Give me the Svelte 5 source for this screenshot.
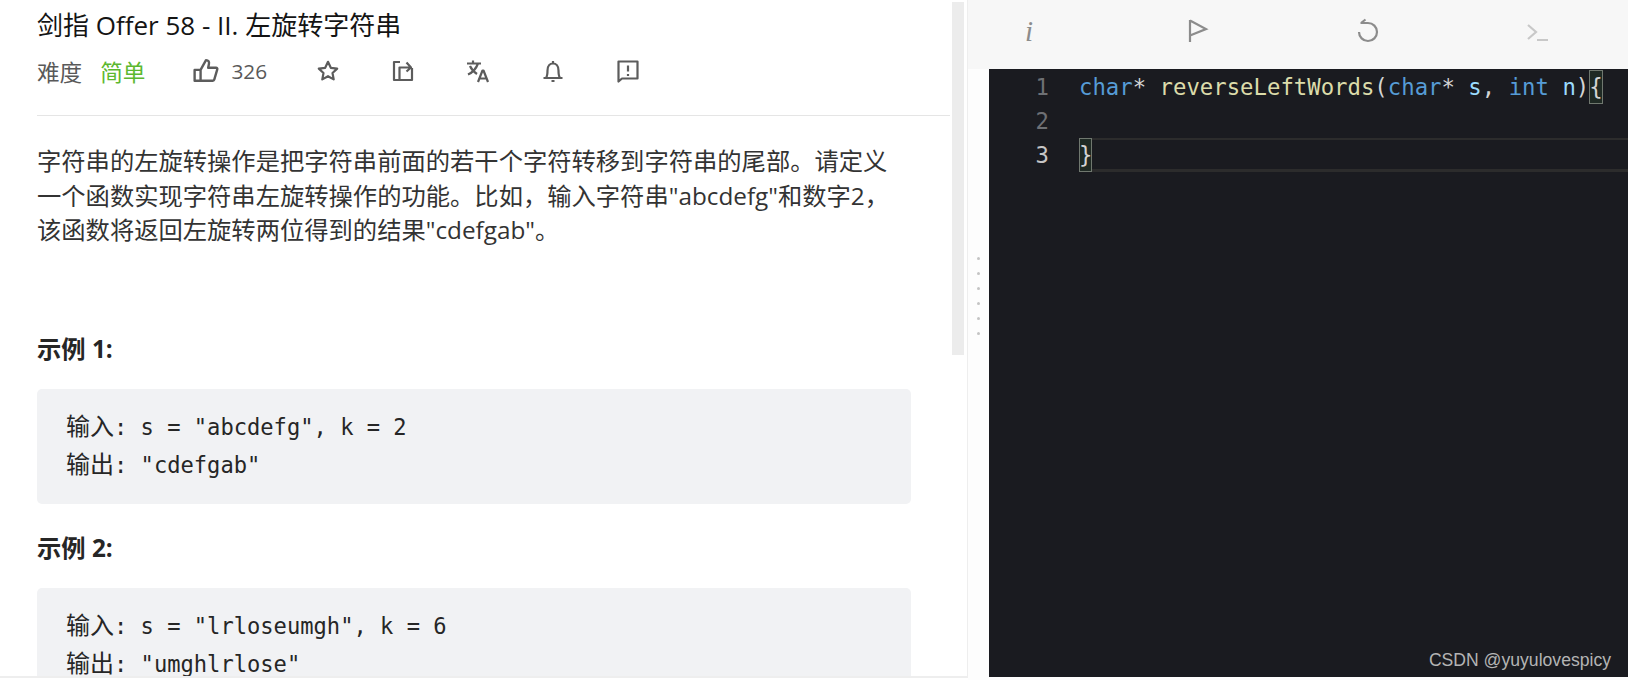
<script>
  const star = 'M12 2.800l2.800 6 6.400.8-4.700 4.400 1.200 6.400-5.700-3.200-5.700 3.200 1.200-6.400-4.700-4.400 6.400-.8z';
</script>

<div class="page">
  <section class="left">
    <div class="scroll-thumb"></div>
    <h1>剑指 Offer 58 - II. 左旋转字符串</h1>
    <div class="meta">
      <span class="label">难度</span>
      <span class="easy">简单</span>
      <div class="actions">
        <span class="action like">
          <svg viewBox="0 0 24 24" class="ico thumb"><path d="M1.500 11h5.500v10H1.500zM7 11l5-9c2.200 0 3.200 1.500 2.700 3.500L14 9h7.300c.8 0 1.400.7 1.100 1.500l-2.700 9.300c-.2.700-.7 1.200-1.400 1.200H7" /></svg>
          <span>326</span>
        </span>
        <span class="action">
          <svg viewBox="0 0 24 24" class="ico"><path d={star} /></svg>
        </span>
        <span class="action">
          <svg viewBox="0 0 24 24" class="ico"><path d="M9 3H3v18h18V9M8.500 20.500V8.500H20M15.500 3.500l4.500 5-4.500 4" /></svg>
        </span>
        <span class="action">
          <svg viewBox="0 0 24 24" class="ico"><path d="M1 4.500h14M7 1.500v3M12 4.500C10 10 6.500 13.500 2 15.500M4 7c1.500 3.500 4 6 7 8M12 23l4.500-11.500h1L22 23M13.500 19.500h7" /></svg>
        </span>
        <span class="action">
          <svg viewBox="0 0 24 24" class="ico"><path d="M2.500 19h19M5 19c1.500-2 1.500-4 1.500-7.500C6.500 7 9 4.500 12 4.500s5.500 2.500 5.500 7c0 3.500 0 5.500 1.500 7.500M12 2v2.500M10.500 22h3" /></svg>
        </span>
        <span class="action">
          <svg viewBox="0 0 24 24" class="ico"><path d="M2.500 2.500h19v17H6l-3.500 3zM12 6.500v6M12 15v2" /></svg>
        </span>
      </div>
    </div>
    <hr />
    <p class="desc">字符串的左旋转操作是把字符串前面的若干个字符转移到字符串的尾部。请定义一个函数实现字符串左旋转操作的功能。比如&#65292;输入字符串"abcdefg"和数字2&#65292;该函数将返回左旋转两位得到的结果"cdefgab"。</p>
    <h4 class="first">示例 1:</h4>
    <pre><span class="cjk">输入</span>: s = "abcdefg", k = 2
<span class="cjk">输出</span>: "cdefgab"</pre>
    <h4>示例 2:</h4>
    <pre><span class="cjk">输入</span>: s = "lrloseumgh", k = 6
<span class="cjk">输出</span>: "umghlrlose"</pre>
  </section>

  <section class="right">
    <div class="toolbar">
      <span class="tool info">i</span>
      <span class="tool">
        <svg viewBox="0 0 24 24" class="tico"><path d="M4 1v22M4 1.500L20 10 4 16.500" /></svg>
      </span>
      <span class="tool">
        <svg viewBox="0 0 24 24" class="tico"><path d="M3 13a9 9 0 1 0 18 0 9 9 0 0 0-9-9H4.500M9.500 .5L5 4" /></svg>
      </span>
      <span class="tool low">
        <svg viewBox="0 0 24 24" class="tico dim"><path d="M3 5l8 7-8 7M12 20h11" /></svg>
      </span>
    </div>
    <div class="body">
      <div class="splitter">
        <i></i><i></i><i></i><i></i><i></i><i></i>
      </div>
      <div class="editor">
        <div class="line">
          <span class="num">1</span>
          <code><span class="kw">char</span>* <span class="fn">reverseLeftWords</span>(<span class="kw">char</span>* <span class="var">s</span>, <span class="kw">int</span> <span class="var">n</span>)<span class="match">{'{'}</span></code>
        </div>
        <div class="line">
          <span class="num">2</span>
          <code></code>
        </div>
        <div class="line current">
          <span class="num">3</span>
          <code><span class="match">{'}'}</span></code>
        </div>
        <div class="watermark">CSDN @yuyulovespicy</div>
      </div>
    </div>
  </section>
</div>

<style>
  :global(body) {
    margin: 0;
    background: #fff;
  }

  .page {
    display: flex;
    width: 1628px;
    height: 680px;
    overflow: hidden;
    font-family: "Open Sans", "Noto Sans CJK SC", sans-serif;
  }

  .left {
    position: relative;
    flex: none;
    box-sizing: border-box;
    width: 968px;
    height: 678px;
    padding: 0 17px 0 37px;
    overflow: hidden;
    border-right: 1px solid #eeeeee;
    border-bottom: 2px solid #eeeeee;
    color: #262626;
  }

  .scroll-thumb {
    position: absolute;
    left: 952px;
    top: 2px;
    width: 12px;
    height: 353px;
    background: #ececec;
  }

  h1 {
    margin: 8px 0 0;
    font-size: 26px;
    line-height: 34px;
    font-weight: 400;
    color: #141414;
  }

  .meta {
    display: flex;
    align-items: center;
    height: 36px;
    margin-top: 11px;
    font-size: 22.600px;
    color: #595959;
  }

  .easy {
    margin-left: 18px;
    color: #5cb82f;
  }

  .actions {
    display: flex;
    align-items: center;
    margin-left: 48px;
  }

  .action {
    display: flex;
    align-items: center;
    width: 75px;
    color: #595959;
    font-size: 20.800px;
  }

  .action.like {
    width: 123px;
    gap: 12px;
  }

  .ico {
    width: 24px;
    height: 24px;
    fill: none;
    stroke: #5c5c5c;
    stroke-width: 2.200;
    stroke-linejoin: round;
  }

  .ico.thumb {
    width: 26px;
    height: 26px;
  }

  hr {
    border: 0;
    height: 1px;
    margin: 26px 0 0;
    background: #e5e5e5;
  }

  .desc {
    margin: 28px 0 0;
    font-size: 24.300px;
    line-height: 34.500px;
    color: #333333;
    width: 860px;
  }

  h4 {
    margin: 27px 0 0;
    font-size: 24.300px;
    line-height: 34px;
    font-weight: 700;
    color: #262626;
  }

  h4.first {
    margin-top: 84px;
  }

  pre {
    box-sizing: border-box;
    margin: 23px 0 0;
    padding: 19px 29px;
    height: 115px;
    width: 874px;
    background: #f1f2f4;
    border-radius: 5px;
    font-family: "DejaVu Sans Mono", "Noto Sans CJK SC", monospace;
    font-size: 22.100px;
    line-height: 38.500px;
    color: #262626;
  }

  .cjk {
    font-size: 24px;
    line-height: 1;
    font-family: "Noto Sans CJK SC", sans-serif;
  }

  .right {
    flex: 1;
    min-width: 0;
    display: flex;
    flex-direction: column;
    background: #fdfdfd;
  }

  .toolbar {
    display: flex;
    align-items: center;
    gap: 129.300px;
    height: 69px;
    padding-left: 41px;
    background: #f7f7f7;
  }

  .tool {
    display: flex;
    justify-content: center;
    width: 40px;
    margin-top: -8px;
  }

  .tool.low {
    margin-top: -5px;
  }

  .info {
    font-family: "Liberation Serif", serif;
    font-style: italic;
    font-size: 29px;
    line-height: 30px;
    color: #8c8c8c;
  }

  .tico {
    width: 24px;
    height: 24px;
    fill: none;
    stroke: #8c8c8c;
    stroke-width: 2.200;
    overflow: visible;
  }

  .tico.dim {
    stroke: #c8c8c8;
  }

  .body {
    flex: 1;
    display: flex;
    min-height: 0;
    padding-bottom: 3px;
  }

  .splitter {
    display: flex;
    flex-direction: column;
    align-items: center;
    gap: 12px;
    width: 21px;
    padding-top: 188px;
    box-sizing: border-box;
  }

  .splitter i {
    width: 3px;
    height: 3px;
    border-radius: 50%;
    background: #c4c4c4;
  }

  .editor {
    position: relative;
    flex: 1;
    background: #1a1b20;
    padding-top: 1px;
    font-family: "DejaVu Sans Mono", monospace;
    font-size: 22.300px;
    color: #d4d4d4;
  }

  .line {
    display: flex;
    height: 34px;
    line-height: 34px;
  }

  .num {
    width: 60px;
    text-align: right;
    color: #6e7074;
    flex: none;
  }

  .line.current .num {
    color: #c6c6c6;
  }

  code {
    flex: 1;
    margin-left: 30px;
    font-family: inherit;
    white-space: pre;
  }

  .line.current code {
    box-shadow: inset 0 2px 0 #2c2c2c, inset 0 -3px 0 #2c2c2c;
  }

  .kw { color: #569cd6; }
  .fn { color: #dcdcaa; }
  .var { color: #9cdcfe; }

  .match {
    display: inline-block;
    box-sizing: border-box;
    height: 34px;
    outline: 1px solid #70786f;
    outline-offset: -1px;
    background: #1f2a24;
  }

  .watermark {
    position: absolute;
    right: 17px;
    bottom: 7px;
    font-family: "Liberation Sans", sans-serif;
    font-size: 17.600px;
    line-height: 20px;
    color: #b4b4b4;
  }
</style>
